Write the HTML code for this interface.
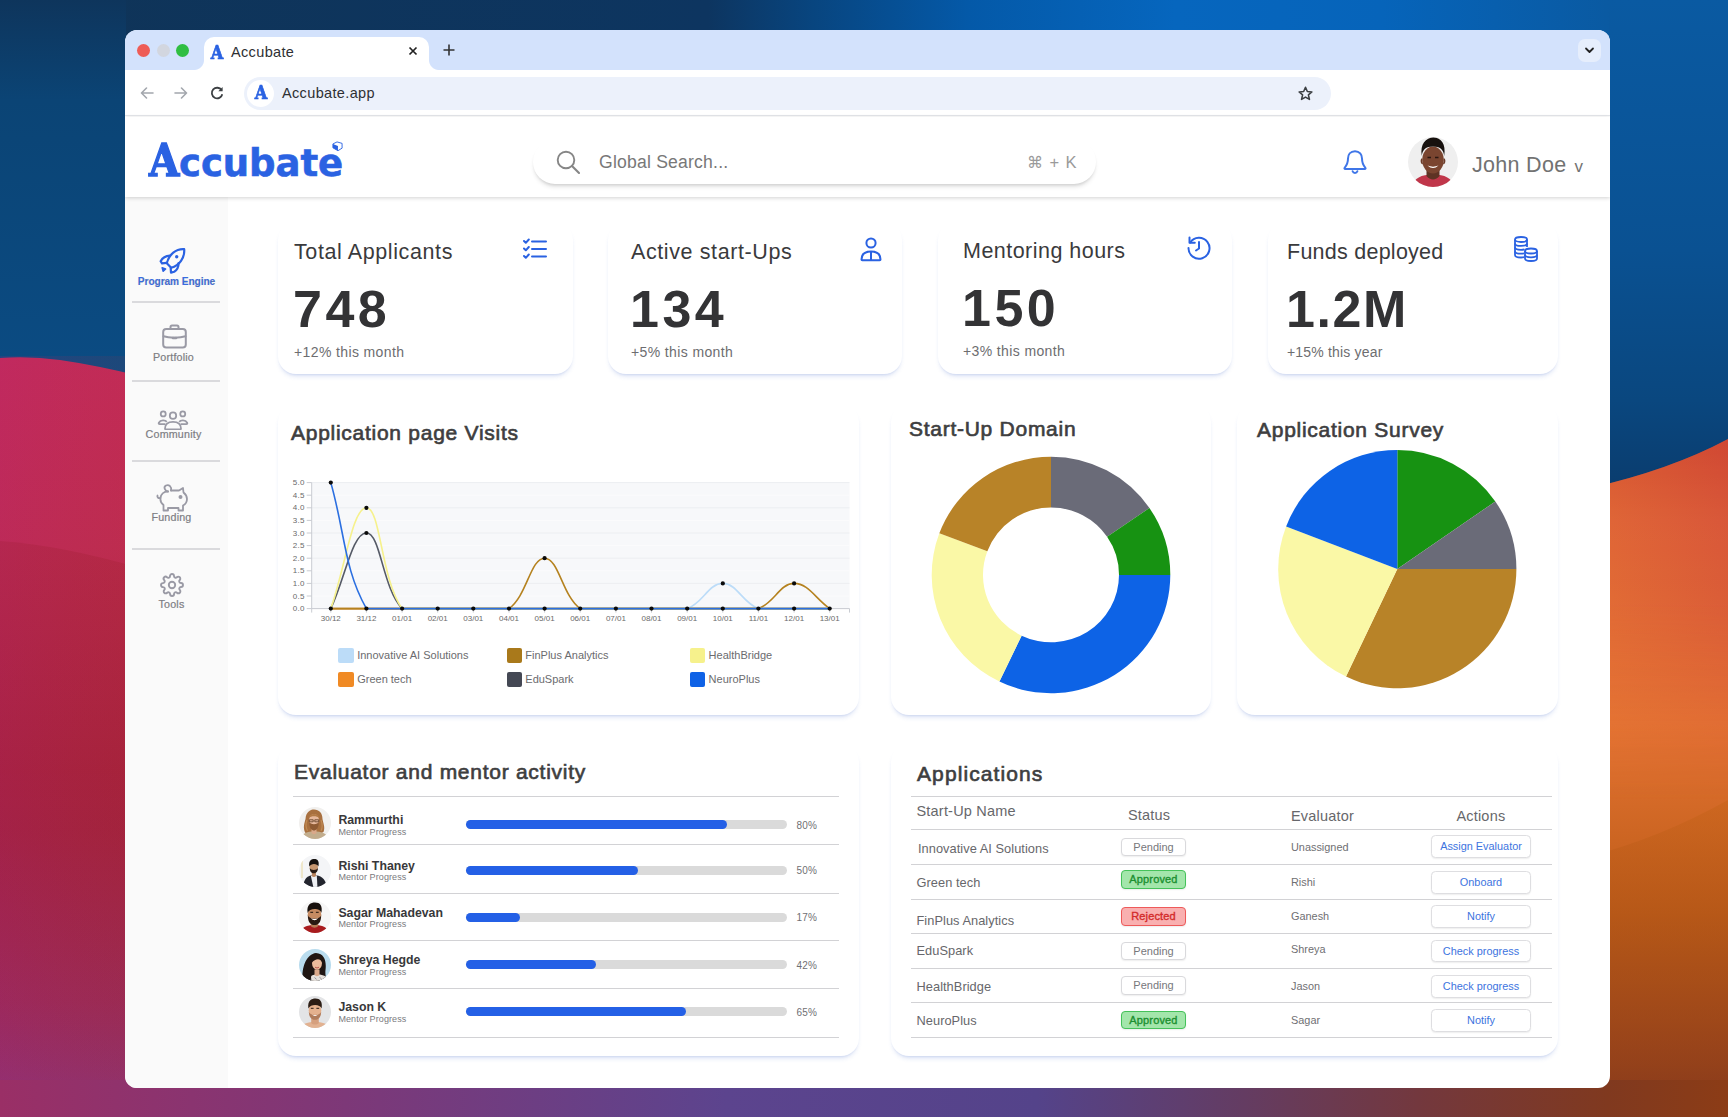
<!DOCTYPE html>
<html lang="en">
<head>
<meta charset="utf-8">
<title>Accubate</title>
<style>
*{box-sizing:border-box;margin:0;padding:0}
html,body{width:1728px;height:1117px;overflow:hidden;background:#0b4a82}
body{font-family:"Liberation Sans",sans-serif;color:#3a3a3c;position:relative}
.abs{position:absolute}
#wall{position:absolute;left:0;top:0;width:1728px;height:1117px}
#win{position:absolute;left:125px;top:30px;width:1485px;height:1058px;border-radius:12px;background:#fff;overflow:hidden}
/* browser chrome */
#tabbar{position:absolute;left:0;top:0;width:1485px;height:40px;background:#d3e2fc}
#tab{position:absolute;left:79px;top:7px;width:225px;height:34px;background:#fff;border-radius:10px 10px 0 0}
#tab:before,#tab:after{content:"";position:absolute;bottom:1px;width:10px;height:10px;background:radial-gradient(circle at 0 0,rgba(255,255,255,0) 9.5px,#fff 10.5px)}
#tab:before{left:-10px}
#tab:after{right:-10px;transform:scaleX(-1)}
#toolbar{position:absolute;left:0;top:40px;width:1485px;height:46px;background:#fff;border-radius:10px 10px 0 0;border-bottom:1px solid #e4e6ea}
#url{position:absolute;left:119px;top:7px;width:1087px;height:33px;border-radius:17px;background:#ecf1fb}
.t{position:absolute;white-space:nowrap;line-height:1}
.fav{font-family:"DejaVu Serif","Liberation Serif",serif;font-weight:bold;color:#2a62e2;-webkit-text-stroke:.7px #2a62e2;transform:scaleX(.9)}
/* app */
#apphead{position:absolute;left:0;top:87px;width:1485px;height:80px;background:#fff;box-shadow:0 1px 4px rgba(0,0,0,.18);z-index:3}
#side{position:absolute;left:0;top:167px;width:103px;height:891px;background:#fafafa}
.logo{color:#2a62e2;font-weight:bold;height:48px;line-height:48px}
.lA{font-family:"DejaVu Serif","Liberation Serif",serif;font-size:44.500px;display:inline-block;transform:scaleX(.88);transform-origin:0 80%;-webkit-text-stroke:1.400px #2a62e2;margin-right:-4.500px}
.lR{font-family:"DejaVu Sans","Liberation Sans",sans-serif;font-size:37px;letter-spacing:-.05px;-webkit-text-stroke:.6px #2a62e2}
.sl{text-align:center;font-size:10.700px;color:#7d7d83;letter-spacing:.2px;-webkit-text-stroke:.2px #7d7d83}
.sd{position:absolute;left:7px;width:88px;height:1.500px;background:#dadadd}
.st{font-size:21.5px;color:#3a3a3c;letter-spacing:.6px;margin-top:1px}
.sn{font-size:52px;font-weight:bold;color:#333335;letter-spacing:3.500px;margin-left:1px}
.ss{font-size:14px;color:#6d6d70;letter-spacing:.38px}
.ct{font-size:21px;color:#3e3e40;letter-spacing:.73px;-webkit-text-stroke:.65px #3e3e40}
.lg{font-size:11px;color:#6b6b6e}
.hl{position:absolute;height:1px;background:#d2d2d5}
.mn{font-size:12.300px;font-weight:bold;color:#38383a}
.mp{font-size:9px;color:#7a7a7e;letter-spacing:.1px}
.pc{font-size:10px;color:#6f6f73;letter-spacing:.3px}
.th{font-size:14.500px;color:#67676b;letter-spacing:.2px}
.tn{font-size:12.800px;color:#67676b;letter-spacing:.05px}
.te{font-size:10.900px;color:#6f6f73}
.bd{position:absolute;width:65px;height:18.500px;line-height:16.500px;border-radius:4px;text-align:center;font-size:11px;border:1px solid #d9d9dc;box-shadow:0 1px 1.500px rgba(0,0,0,.07)}
.bp{color:#77777b;background:#fff}
.ba{color:#1c8f30;background:#a3e6ab;border-color:#45c25a;-webkit-text-stroke:.35px #1c8f30;letter-spacing:.15px}
.br{color:#d32b2b;background:#f9b0b0;border-color:#ee5a5a;-webkit-text-stroke:.35px #d32b2b;letter-spacing:.15px}
.bt{position:absolute;width:100px;height:22.500px;line-height:20.500px;border-radius:4.500px;text-align:center;font-size:10.900px;color:#3d74e0;border:1px solid #dedee1;background:#fff;box-shadow:0 1px 1.500px rgba(0,0,0,.07)}
.card{position:absolute;background:#fff;border-radius:18px;box-shadow:0 4px 5px -2px rgba(60,100,200,.2),0 2px 2px -1px rgba(60,100,200,.1)}
</style>
</head>
<body>
<svg id="wall" viewBox="0 0 1728 1117">
<defs>
<linearGradient id="gTop" x1="0" y1="0" x2="1" y2="0">
<stop offset="0" stop-color="#0f3458"/><stop offset="0.41" stop-color="#0d3560"/><stop offset="0.47" stop-color="#08457f"/><stop offset="0.56" stop-color="#0459a8"/><stop offset="0.68" stop-color="#0666be"/><stop offset="0.8" stop-color="#0664ba"/><stop offset="0.93" stop-color="#0a5aa2"/><stop offset="1" stop-color="#0b5596"/>
</linearGradient>
<linearGradient id="gLeftBlue" x1="0" y1="0" x2="0" y2="1">
<stop offset="0" stop-color="#0e355c"/><stop offset="0.25" stop-color="#0b4475"/><stop offset="1" stop-color="#0b4c84"/>
</linearGradient>
<linearGradient id="gPink" x1="0" y1="0" x2="0" y2="1">
<stop offset="0" stop-color="#c42b5a"/><stop offset="0.25" stop-color="#bf2c52"/><stop offset="0.62" stop-color="#a3213a"/><stop offset="0.85" stop-color="#9a2a55"/><stop offset="1" stop-color="#8a3578"/>
</linearGradient>
<linearGradient id="gPink2" x1="0" y1="541" x2="0" y2="1117" gradientUnits="userSpaceOnUse">
<stop offset="0" stop-color="#b22744" stop-opacity=".75"/><stop offset="0.4" stop-color="#a3203a" stop-opacity=".6"/><stop offset="0.7" stop-color="#9a2850" stop-opacity=".3"/><stop offset="1" stop-color="#8a3578" stop-opacity="0"/>
</linearGradient>
<linearGradient id="gPinkH" x1="0" y1="0" x2="1" y2="0">
<stop offset="0" stop-color="#b0207a" stop-opacity=".16"/><stop offset="1" stop-color="#b03030" stop-opacity=".1"/>
</linearGradient>
<linearGradient id="gRightBlue" x1="0" y1="0" x2="0" y2="1">
<stop offset="0" stop-color="#0a5aa2"/><stop offset="0.5" stop-color="#0a5192"/><stop offset="0.8" stop-color="#0a477f"/><stop offset="1" stop-color="#0a3b6c"/>
</linearGradient>
<linearGradient id="gOrange" x1="0" y1="0" x2="0" y2="1">
<stop offset="0" stop-color="#cf4730"/><stop offset="0.12" stop-color="#dc5f39"/><stop offset="0.42" stop-color="#e47333"/><stop offset="0.7" stop-color="#bd5c17"/><stop offset="0.9" stop-color="#98441a"/><stop offset="1" stop-color="#82381c"/>
</linearGradient>
<linearGradient id="gOrH" x1="0" y1="0" x2="1" y2="0">
<stop offset="0" stop-color="#e87832" stop-opacity=".35"/><stop offset="1" stop-color="#d24a3a" stop-opacity=".35"/>
</linearGradient>
<linearGradient id="gFade" x1="0" y1="439" x2="0" y2="800" gradientUnits="userSpaceOnUse"><stop offset="0" stop-color="#fff"/><stop offset="0.45" stop-color="#fff"/><stop offset="1" stop-color="#000"/></linearGradient>
<mask id="mOr" maskUnits="userSpaceOnUse" x="1590" y="430" width="138" height="380"><rect x="1590" y="430" width="138" height="380" fill="url(#gFade)"/></mask>
<linearGradient id="gOr2" x1="0" y1="800" x2="0" y2="1117" gradientUnits="userSpaceOnUse">
<stop offset="0" stop-color="#c8641a" stop-opacity=".55"/><stop offset="0.5" stop-color="#a84e18" stop-opacity=".5"/><stop offset="1" stop-color="#8c3a1c" stop-opacity=".3"/>
</linearGradient>
<linearGradient id="gBottom" x1="0" y1="0" x2="1" y2="0">
<stop offset="0" stop-color="#9a2f66"/><stop offset="0.2" stop-color="#7d3878"/><stop offset="0.42" stop-color="#5c448e"/><stop offset="0.6" stop-color="#54438a"/><stop offset="0.72" stop-color="#643c62"/><stop offset="0.82" stop-color="#73383e"/><stop offset="0.93" stop-color="#80391f"/><stop offset="1" stop-color="#8c3c16"/>
</linearGradient>
</defs>
<rect x="0" y="0" width="1728" height="1117" fill="url(#gTop)"/>
<rect x="0" y="0" width="126" height="400" fill="url(#gLeftBlue)"/>
<path d="M0 358 Q30 356 60 360 Q95 365 140 376 L140 1117 L0 1117Z" fill="url(#gPink)"/>
<path d="M0 541 Q60 545 140 568 L140 1117 L0 1117Z" fill="url(#gPink2)"/>
<rect x="0" y="356" width="140" height="761" fill="url(#gPinkH)"/>
<rect x="1609" y="0" width="119" height="500" fill="url(#gRightBlue)"/>
<path d="M1590 488 Q1670 470 1728 439 L1728 1117 L1590 1117Z" fill="url(#gOrange)"/>
<path d="M1590 488 Q1670 470 1728 439 L1728 800 L1590 800Z" fill="url(#gOrH)" mask="url(#mOr)"/>
<path d="M1590 856 Q1660 838 1728 800 L1728 1117 L1590 1117Z" fill="url(#gOr2)"/>
<rect x="0" y="1080" width="1728" height="37" fill="url(#gBottom)"/>
</svg>

<div id="win">
  <div id="tabbar">
    <div class="abs" style="left:12px;top:14px;width:13px;height:13px;border-radius:50%;background:#ee5c56"></div>
    <div class="abs" style="left:32px;top:14px;width:13px;height:13px;border-radius:50%;background:#d2d6df"></div>
    <div class="abs" style="left:51px;top:14px;width:13px;height:13px;border-radius:50%;background:#2fbe42"></div>
    <div id="tab">
      <span class="t fav" style="left:6px;top:7px;font-size:18px">A</span>
      <span class="t" style="left:27px;top:8px;font-size:14.5px;color:#2e3033;letter-spacing:.35px">Accubate</span>
      <svg class="abs" style="left:204px;top:9px" width="10" height="10" viewBox="0 0 10 10"><path d="M1.5 1.5 L8.5 8.5 M8.5 1.5 L1.5 8.5" stroke="#222" stroke-width="1.7" fill="none"/></svg>
    </div>
    <svg class="abs" style="left:318px;top:14px" width="12" height="12" viewBox="0 0 12 12"><path d="M6 0.5 V11.5 M0.5 6 H11.5" stroke="#333" stroke-width="1.6" fill="none"/></svg>
    <div class="abs" style="left:1453px;top:9px;width:23px;height:23px;border-radius:7px;background:#e6eefc"></div>
    <svg class="abs" style="left:1459px;top:16px" width="11" height="9" viewBox="0 0 11 9"><path d="M2 2.5 L5.5 6 L9 2.5" stroke="#222" stroke-width="1.8" fill="none" stroke-linecap="round" stroke-linejoin="round"/></svg>
  </div>
  <div id="toolbar">
    <svg class="abs" style="left:15px;top:17px" width="14" height="12" viewBox="0 0 14 12"><path d="M13 6 H2 M6.5 1 L1.5 6 L6.5 11" stroke="#a3a7ad" stroke-width="1.6" fill="none" stroke-linecap="round" stroke-linejoin="round"/></svg>
    <svg class="abs" style="left:49px;top:17px" width="14" height="12" viewBox="0 0 14 12"><path d="M1 6 H12 M7.5 1 L12.5 6 L7.5 11" stroke="#a3a7ad" stroke-width="1.6" fill="none" stroke-linecap="round" stroke-linejoin="round"/></svg>
    <svg class="abs" style="left:85px;top:16px" width="14" height="14" viewBox="0 0 14 14"><path d="M11.6 4.2 A5.3 5.3 0 1 0 12.3 8.2" stroke="#3c4043" stroke-width="1.8" fill="none"/><path d="M12.6 1 V5.3 H8.3 Z" fill="#3c4043"/></svg>
    <div id="url">
      <div class="abs" style="left:3px;top:3px;width:27px;height:27px;border-radius:50%;background:#fff"></div>
      <span class="t fav" style="left:9.500px;top:6.500px;font-size:18px">A</span>
      <span class="t" style="left:38px;top:8.500px;font-size:14.5px;color:#2e3033;letter-spacing:.35px">Accubate.app</span>
      <svg class="abs" style="left:1053px;top:8px" width="17" height="17" viewBox="0 0 24 24"><path d="M12 3.2 L14.6 9.2 L21 9.8 L16.1 14 L17.6 20.4 L12 17 L6.4 20.4 L7.9 14 L3 9.8 L9.4 9.2 Z" stroke="#3c4043" stroke-width="2.2" fill="none" stroke-linejoin="round"/></svg>
    </div>
  </div>
  <div id="apphead">
    <span class="t logo" style="left:24px;top:18.500px"><span class="lA">A</span><span class="lR">ccubate</span></span>
    <svg class="abs" style="left:207px;top:24px" width="11" height="11" viewBox="0 0 12 12"><path d="M1 3.2 L5.5 1 L11 2.6 L11 7.8 L6.5 10.6 L1 7.4Z" fill="#fff" stroke="#2a62e2" stroke-width="1"/><path d="M1 3.2 L6.5 5.4 L6.5 10.6 L1 7.4Z" fill="#2a62e2"/></svg>
    <div class="abs" style="left:408px;top:23px;width:563px;height:44px;border-radius:22px;background:#fff;box-shadow:0 4px 5px -2px rgba(0,0,0,.16),0 2px 3px -1px rgba(0,0,0,.07)"></div>
    <svg class="abs" style="left:430px;top:32px" width="28" height="28" viewBox="0 0 28 28"><circle cx="11" cy="11" r="8.3" stroke="#868686" stroke-width="1.9" fill="none"/><path d="M17 17 L24 24" stroke="#868686" stroke-width="2.1" stroke-linecap="round"/></svg>
    <span class="t" style="left:474px;top:37px;font-size:17.600px;color:#787878;letter-spacing:.2px">Global Search...</span>
    <span class="t" style="left:902px;top:37px;font-size:16.500px;color:#9a9a9a;letter-spacing:.9px"><span style="font-family:'DejaVu Sans',sans-serif;font-size:16px">&#8984;</span> + K</span>
    <svg class="abs" style="left:1215px;top:30px" width="30" height="30" viewBox="0 0 30 30"><path d="M15 4.2 C10.4 4.2 8 7.6 8 11.6 C8 16.4 6.6 18.6 4.6 20.8 C4.2 21.3 4.5 22 5.2 22 H24.8 C25.5 22 25.8 21.3 25.4 20.8 C23.4 18.6 22 16.4 22 11.6 C22 7.6 19.6 4.2 15 4.2Z" stroke="#3f76e8" stroke-width="2" fill="none" stroke-linejoin="round"/><path d="M12.6 24.2 C13 25.4 13.9 26 15 26 C16.1 26 17 25.4 17.4 24.2" stroke="#3f76e8" stroke-width="2" fill="none" stroke-linecap="round"/></svg>
    <svg class="abs" style="left:1283px;top:20px" width="50" height="50" viewBox="0 0 50 50"><defs><clipPath id="cpJ"><circle cx="25" cy="25" r="25"/></clipPath></defs><g clip-path="url(#cpJ)"><rect width="50" height="50" fill="#efefef"/><path d="M4 50 C6 41 13 37.500 25 37.500 C37 37.500 44 41 46 50Z" fill="#c0364a"/><path d="M18.500 31 H31.500 V39 C28 43.500 22 43.500 18.500 39Z" fill="#5e3324"/><ellipse cx="25" cy="23" rx="10.800" ry="13.500" fill="#7a4530"/><path d="M13.800 19 C11.800 7 18 0.500 25.500 0.500 C33 0.500 38.200 7 36.200 19 C35.600 12.500 32 9.500 25 9.500 C18 9.500 14.400 12.500 13.800 19Z" fill="#17110e"/><path d="M19.500 28.500 Q25 33.500 30.500 28.500 Q25 30.800 19.500 28.500Z" fill="#fff"/><path d="M19.500 20.500 h3.500 m4 0 h3.500" stroke="#2a1710" stroke-width="1.300"/><path d="M14.300 22 C13 22 13 26.500 14.800 26.500 M35.700 22 C37 22 37 26.500 35.200 26.500" stroke="#6a3a28" stroke-width="1.500" fill="none"/></g></svg>
    <span class="t" style="left:1347px;top:38px;font-size:21.5px;color:#727272;letter-spacing:.3px">John Doe</span>
    <span class="t" style="left:1449.500px;top:40.500px;font-size:17px;color:#727272">v</span>
  </div>
  <div id="side">
    <!-- Program Engine -->
    <svg class="abs" style="left:33px;top:48.500px" width="30" height="30" viewBox="0 0 30 30" fill="none" stroke="#2a62e2" stroke-width="2.200" stroke-linecap="round" stroke-linejoin="round"><path d="M26.200 3.200 C18 2.600 11 8.500 8.800 17.200 L13.200 21.800 C21.500 19.500 26.800 12 26.200 3.200Z"/><circle cx="18.700" cy="10.800" r="1.700" fill="#2a62e2" stroke="none"/><path d="M11.800 9.600 C7.500 9.800 4.200 12.300 2.600 15.200 L4 17.400 L8.600 16.800"/><path d="M20.600 17 C20.600 21 18.800 24.200 16.200 25.800 L13 26.600 L12.700 22"/><path d="M4.200 21.800 L7.600 23 L5.200 25.200Z" fill="#2a62e2" stroke-width="1.600"/></svg>
    <span class="t sl" style="left:0;width:103px;top:80px;color:#376be3;font-weight:bold;font-size:10.100px;letter-spacing:-.05px">Program Engine</span>
    <div class="sd" style="top:104px"></div>
    <!-- Portfolio -->
    <svg class="abs" style="left:34.500px;top:126px" width="28" height="26" viewBox="0 0 28 26" fill="none" stroke="#9a9aa5" stroke-width="2" stroke-linejoin="round" stroke-linecap="round"><rect x="3.200" y="6" width="22.600" height="18.500" rx="3"/><path d="M10.500 6 V4 C10.500 3 11 2.500 12 2.500 H17 C18 2.500 18.500 3 18.500 4 V6"/><path d="M3.500 13.300 C9 15.200 20 15.200 25.500 13.300"/><path d="M13 15 H16" stroke-width="2.600"/></svg>
    <span class="t sl" style="left:0;width:97px;top:155px">Portfolio</span>
    <div class="sd" style="top:183px"></div>
    <!-- Community -->
    <svg class="abs" style="left:32px;top:211.500px" width="32" height="21.300" viewBox="0 0 36 24" fill="none" stroke="#9a9aa5" stroke-width="2" stroke-linejoin="round"><circle cx="18" cy="7.500" r="3.600"/><circle cx="7" cy="5.500" r="2.800"/><circle cx="29" cy="5.500" r="2.800"/><path d="M9 22 C9 17 12.500 14.500 18 14.500 C23.500 14.500 27 17 27 22 C27 22.600 26.600 23 26 23 H10 C9.400 23 9 22.600 9 22Z"/><path d="M11 14.500 C9.500 12.500 4 12 2 15.500 C1.600 16.300 2 17 3 17 H9.500"/><path d="M25 14.500 C26.500 12.500 32 12 34 15.500 C34.400 16.300 34 17 33 17 H26.500"/></svg>
    <span class="t sl" style="left:0;width:97px;top:232px">Community</span>
    <div class="sd" style="top:263px"></div>
    <!-- Funding -->
    <svg class="abs" style="left:30px;top:285.500px" width="34" height="30" viewBox="0 0 34 30" fill="none" stroke="#9a9aa5" stroke-width="1.800" stroke-linejoin="round" stroke-linecap="round"><path d="M13 8.500 C10 8 8 4 11 2.500 C14 1 17 4 16 7.500"/><path d="M16 7.500 H24 L28 5 L28.500 9.500 C31 11.500 32 14 32 16 C32 20 30 21.500 28 22.500 V27.500 H23.500 V25 H13 V27.500 H8.500 V22 C6 20 5 17.500 5.500 14.500 C6 11.500 8.500 8.500 13 8.500"/><path d="M5.500 15 C3 15.500 2 14 2.500 12.500"/><circle cx="25.500" cy="14" r="1.100" fill="#9a9aa5"/></svg>
    <span class="t sl" style="left:0;width:93px;top:315px">Funding</span>
    <div class="sd" style="top:351px"></div>
    <!-- Tools -->
    <svg class="abs" style="left:35px;top:375.500px" width="24" height="24" viewBox="0 0 24 24" fill="none" stroke="#9a9aa5" stroke-width="1.900" stroke-linejoin="round"><circle cx="12" cy="12" r="3.200"/><path d="M19.400 15a1.650 1.650 0 0 0 .33 1.820l.06.06a2 2 0 1 1-2.830 2.830l-.06-.06a1.650 1.650 0 0 0-1.820-.33 1.650 1.650 0 0 0-1 1.510V21a2 2 0 0 1-4 0v-.09A1.650 1.650 0 0 0 9 19.400a1.650 1.650 0 0 0-1.820.33l-.06.06a2 2 0 1 1-2.830-2.830l.06-.06a1.650 1.650 0 0 0 .33-1.820 1.650 1.650 0 0 0-1.510-1H3a2 2 0 0 1 0-4h.09A1.650 1.650 0 0 0 4.600 9a1.650 1.650 0 0 0-.33-1.820l-.06-.06a2 2 0 1 1 2.830-2.830l.06.06a1.650 1.650 0 0 0 1.820.33H9a1.650 1.650 0 0 0 1-1.510V3a2 2 0 0 1 4 0v.09a1.650 1.650 0 0 0 1 1.510 1.650 1.650 0 0 0 1.820-.33l.06-.06a2 2 0 1 1 2.830 2.830l-.06.06a1.650 1.650 0 0 0-.33 1.820V9a1.650 1.650 0 0 0 1.510 1H21a2 2 0 0 1 0 4h-.09a1.650 1.650 0 0 0-1.510 1z"/></svg>
    <span class="t sl" style="left:0;width:93px;top:402px">Tools</span>
  </div>
  <!-- stat cards -->
  <div class="card" style="left:153px;top:192px;width:295px;height:152px"></div>
  <span class="t st" style="left:169px;top:211px">Total Applicants</span>
  <span class="t sn" style="left:167px;top:253px">748</span>
  <span class="t ss" style="left:169px;top:315px">+12% this month</span>
  <svg class="abs" style="left:397px;top:207px" width="26" height="24" viewBox="0 0 26 24" fill="none" stroke="#2a62e2" stroke-width="2" stroke-linecap="round" stroke-linejoin="round"><path d="M10 4.500 H24 M10 12 H24 M10 19.500 H24"/><path d="M2 4 L3.800 5.800 L6.800 2.500 M2 11.500 L3.800 13.300 L6.800 10 M2 19 L3.800 20.800 L6.800 17.500"/></svg>
  <div class="card" style="left:483px;top:192px;width:294px;height:152px"></div>
  <span class="t st" style="left:506px;top:211px">Active start-Ups</span>
  <span class="t sn" style="left:504px;top:253px">134</span>
  <span class="t ss" style="left:506px;top:315px">+5% this month</span>
  <svg class="abs" style="left:734px;top:206px" width="24" height="26" viewBox="0 0 24 26" fill="none" stroke="#2a62e2" stroke-width="2" stroke-linejoin="round"><circle cx="12" cy="7" r="4.600"/><path d="M2.500 23.500 C2.500 18 6.500 15.500 12 15.500 C17.500 15.500 21.500 18 21.500 23.500 C21.500 24 21.200 24.300 20.700 24.300 H3.300 C2.800 24.300 2.500 24 2.500 23.500Z"/><path d="M12 16 V24"/></svg>
  <div class="card" style="left:813px;top:192px;width:294px;height:152px"></div>
  <span class="t st" style="left:838px;top:210px;letter-spacing:.47px">Mentoring hours</span>
  <span class="t sn" style="left:836px;top:252px">150</span>
  <span class="t ss" style="left:838px;top:314px">+3% this month</span>
  <svg class="abs" style="left:1060px;top:204px" width="28" height="28" viewBox="0 0 28 28" fill="none" stroke="#2a62e2" stroke-width="2" stroke-linecap="round" stroke-linejoin="round"><path d="M5.200 8.500 A10.500 10.500 0 1 1 3.500 14"/><path d="M4.500 3.500 V8.800 H9.800"/><path d="M14 8 V14.500 L11 16.500"/></svg>
  <div class="card" style="left:1143px;top:192px;width:290px;height:152px"></div>
  <span class="t st" style="left:1162px;top:211px;letter-spacing:.25px">Funds deployed</span>
  <span class="t sn" style="left:1160px;top:253px;letter-spacing:1.600px">1.2M</span>
  <span class="t ss" style="left:1162px;top:315px;letter-spacing:.18px">+15% this year</span>
  <svg class="abs" style="left:1387px;top:205px" width="28" height="28" viewBox="0 0 28 28" fill="none" stroke="#2a62e2" stroke-width="1.800" stroke-linejoin="round"><ellipse cx="9" cy="4.500" rx="6" ry="2.500"/><path d="M3 4.500 V20 C3 21.400 5.700 22.500 9 22.500 C10 22.500 11 22.400 12 22.200"/><path d="M15 4.500 V12"/><path d="M3 8.400 C3 9.800 5.700 10.900 9 10.900 C12.300 10.900 15 9.800 15 8.400 M3 12.300 C3 13.700 5.700 14.800 9 14.800 C10.500 14.800 11.500 14.600 12.500 14.300 M3 16.200 C3 17.600 5.700 18.700 9 18.700 C10 18.700 11 18.600 12 18.400"/><ellipse cx="19" cy="16" rx="6" ry="2.500"/><path d="M13 16 V23.500 C13 24.900 15.700 26 19 26 C22.300 26 25 24.900 25 23.500 V16"/><path d="M13 19.800 C13 21.200 15.700 22.300 19 22.300 C22.300 22.300 25 21.200 25 19.800"/></svg>
  <!--ROW2START-->
  <div class="card" style="left:153px;top:374px;width:581px;height:311px"></div>
  <div class="card" style="left:766px;top:374px;width:320px;height:311px"></div>
  <div class="card" style="left:1112px;top:374px;width:321px;height:311px"></div>
  <span class="t ct" style="left:166px;top:392px">Application page Visits</span>
  <span class="t ct" style="left:784px;top:388px">Start-Up Domain</span>
  <span class="t ct" style="left:1132px;top:389px">Application Survey</span>
  <svg class="abs" style="left:160px;top:440px" width="575" height="160" viewBox="0 0 575 160" font-family="Liberation Sans, sans-serif" font-size="8" fill="#6a6a6a"><rect x="26.7" y="12.6" width="537.8" height="126.0" fill="#f7f8fa"/><path d="M26.7 138.6 H564.5" stroke="#eceef1" stroke-width="1"/><path d="M21.7 138.6 H26.7" stroke="#c9ccd2" stroke-width="1"/><text x="19.7" y="141.2" text-anchor="end" letter-spacing=".3">0.0</text><path d="M26.7 126.0 H564.5" stroke="#fbfbfc" stroke-width="1"/><path d="M21.7 126.0 H26.7" stroke="#c9ccd2" stroke-width="1"/><text x="19.7" y="128.6" text-anchor="end" letter-spacing=".3">0.5</text><path d="M26.7 113.4 H564.5" stroke="#eceef1" stroke-width="1"/><path d="M21.7 113.4 H26.7" stroke="#c9ccd2" stroke-width="1"/><text x="19.7" y="116.0" text-anchor="end" letter-spacing=".3">1.0</text><path d="M26.7 100.8 H564.5" stroke="#fbfbfc" stroke-width="1"/><path d="M21.7 100.8 H26.7" stroke="#c9ccd2" stroke-width="1"/><text x="19.7" y="103.4" text-anchor="end" letter-spacing=".3">1.5</text><path d="M26.7 88.2 H564.5" stroke="#eceef1" stroke-width="1"/><path d="M21.7 88.2 H26.7" stroke="#c9ccd2" stroke-width="1"/><text x="19.7" y="90.8" text-anchor="end" letter-spacing=".3">2.0</text><path d="M26.7 75.6 H564.5" stroke="#fbfbfc" stroke-width="1"/><path d="M21.7 75.6 H26.7" stroke="#c9ccd2" stroke-width="1"/><text x="19.7" y="78.2" text-anchor="end" letter-spacing=".3">2.5</text><path d="M26.7 63.0 H564.5" stroke="#eceef1" stroke-width="1"/><path d="M21.7 63.0 H26.7" stroke="#c9ccd2" stroke-width="1"/><text x="19.7" y="65.6" text-anchor="end" letter-spacing=".3">3.0</text><path d="M26.7 50.4 H564.5" stroke="#fbfbfc" stroke-width="1"/><path d="M21.7 50.4 H26.7" stroke="#c9ccd2" stroke-width="1"/><text x="19.7" y="53.0" text-anchor="end" letter-spacing=".3">3.5</text><path d="M26.7 37.8 H564.5" stroke="#eceef1" stroke-width="1"/><path d="M21.7 37.8 H26.7" stroke="#c9ccd2" stroke-width="1"/><text x="19.7" y="40.4" text-anchor="end" letter-spacing=".3">4.0</text><path d="M26.7 25.2 H564.5" stroke="#fbfbfc" stroke-width="1"/><path d="M21.7 25.2 H26.7" stroke="#c9ccd2" stroke-width="1"/><text x="19.7" y="27.8" text-anchor="end" letter-spacing=".3">4.5</text><path d="M26.7 12.6 H564.5" stroke="#eceef1" stroke-width="1"/><path d="M21.7 12.6 H26.7" stroke="#c9ccd2" stroke-width="1"/><text x="19.7" y="15.2" text-anchor="end" letter-spacing=".3">5.0</text><path d="M26.7 12.6 V142.6" stroke="#c9ccd2" stroke-width="1"/><path d="M26.7 138.6 H564.5" stroke="#c9ccd2" stroke-width="1"/><path d="M45.8 138.6 v4" stroke="#c9ccd2" stroke-width="1"/><text x="45.8" y="151.0" text-anchor="middle">30/12</text><path d="M81.4 138.6 v4" stroke="#c9ccd2" stroke-width="1"/><text x="81.4" y="151.0" text-anchor="middle">31/12</text><path d="M117.1 138.6 v4" stroke="#c9ccd2" stroke-width="1"/><text x="117.1" y="151.0" text-anchor="middle">01/01</text><path d="M152.7 138.6 v4" stroke="#c9ccd2" stroke-width="1"/><text x="152.7" y="151.0" text-anchor="middle">02/01</text><path d="M188.3 138.6 v4" stroke="#c9ccd2" stroke-width="1"/><text x="188.3" y="151.0" text-anchor="middle">03/01</text><path d="M224.0 138.6 v4" stroke="#c9ccd2" stroke-width="1"/><text x="224.0" y="151.0" text-anchor="middle">04/01</text><path d="M259.6 138.6 v4" stroke="#c9ccd2" stroke-width="1"/><text x="259.6" y="151.0" text-anchor="middle">05/01</text><path d="M295.2 138.6 v4" stroke="#c9ccd2" stroke-width="1"/><text x="295.2" y="151.0" text-anchor="middle">06/01</text><path d="M330.9 138.6 v4" stroke="#c9ccd2" stroke-width="1"/><text x="330.9" y="151.0" text-anchor="middle">07/01</text><path d="M366.5 138.6 v4" stroke="#c9ccd2" stroke-width="1"/><text x="366.5" y="151.0" text-anchor="middle">08/01</text><path d="M402.2 138.6 v4" stroke="#c9ccd2" stroke-width="1"/><text x="402.2" y="151.0" text-anchor="middle">09/01</text><path d="M437.8 138.6 v4" stroke="#c9ccd2" stroke-width="1"/><text x="437.8" y="151.0" text-anchor="middle">10/01</text><path d="M473.4 138.6 v4" stroke="#c9ccd2" stroke-width="1"/><text x="473.4" y="151.0" text-anchor="middle">11/01</text><path d="M509.1 138.6 v4" stroke="#c9ccd2" stroke-width="1"/><text x="509.1" y="151.0" text-anchor="middle">12/01</text><path d="M544.7 138.6 v4" stroke="#c9ccd2" stroke-width="1"/><text x="544.7" y="151.0" text-anchor="middle">13/01</text><path d="M564.5 138.6 v4" stroke="#c9ccd2" stroke-width="1"/><path d="M45.8 138.6 C60.1 138.6 67.2 138.6 81.4 138.6 C95.7 138.6 102.8 138.6 117.1 138.6 C131.3 138.6 138.5 138.6 152.7 138.6 C167.0 138.6 174.1 138.6 188.3 138.6 C202.6 138.6 209.7 138.6 224.0 138.6 C238.2 138.6 245.4 138.6 259.6 138.6 C273.9 138.6 281.0 138.6 295.2 138.6 C309.5 138.6 316.6 138.6 330.9 138.6 C345.1 138.6 352.3 138.6 366.5 138.6 C380.8 138.6 389.3 138.6 402.2 138.6 C417.9 133.1 423.5 113.4 437.8 113.4 C452.0 113.4 457.7 133.1 473.4 138.6 C486.2 138.6 494.8 138.6 509.1 138.6 C523.3 138.6 530.4 138.6 544.7 138.6" fill="none" stroke="#bcdcf8" stroke-width="1.600"/><path d="M45.8 138.6 C60.1 138.6 67.2 138.6 81.4 138.6 C95.7 138.6 102.8 138.6 117.1 138.6 C131.3 138.6 138.5 138.6 152.7 138.6 C167.0 138.6 174.1 138.6 188.3 138.6 C202.6 138.6 209.7 138.6 224.0 138.6 C238.2 138.6 245.4 138.6 259.6 138.6 C273.9 138.6 281.0 138.6 295.2 138.6 C309.5 138.6 316.6 138.6 330.9 138.6 C345.1 138.6 352.3 138.6 366.5 138.6 C380.8 138.6 387.9 138.6 402.2 138.6 C416.4 138.6 423.5 138.6 437.8 138.6 C452.0 138.6 459.2 138.6 473.4 138.6 C487.7 138.6 494.8 138.6 509.1 138.6 C523.3 138.6 530.4 138.6 544.7 138.6" fill="none" stroke="#f08a24" stroke-width="1.600"/><path d="M45.8 138.6 C60.1 138.6 67.2 138.6 81.4 138.6 C95.7 138.6 102.8 138.6 117.1 138.6 C131.3 138.6 138.5 138.6 152.7 138.6 C167.0 138.6 174.1 138.6 188.3 138.6 C202.6 138.6 213.5 138.6 224.0 138.6 C242.1 125.8 245.4 88.2 259.6 88.2 C273.9 88.2 277.2 125.8 295.2 138.6 C305.7 138.6 316.6 138.6 330.9 138.6 C345.1 138.6 352.3 138.6 366.5 138.6 C380.8 138.6 387.9 138.6 402.2 138.6 C416.4 138.6 423.5 138.6 437.8 138.6 C452.0 138.6 460.6 138.6 473.4 138.6 C489.1 133.1 494.8 113.4 509.1 113.4 C523.3 113.4 530.4 128.5 544.7 138.6" fill="none" stroke="#b5821f" stroke-width="1.600"/><path d="M45.8 138.6 C60.1 108.4 67.2 63.0 81.4 63.0 C95.7 63.0 97.1 117.4 117.1 138.6 C125.6 138.6 138.5 138.6 152.7 138.6 C167.0 138.6 174.1 138.6 188.3 138.6 C202.6 138.6 209.7 138.6 224.0 138.6 C238.2 138.6 245.4 138.6 259.6 138.6 C273.9 138.6 281.0 138.6 295.2 138.6 C309.5 138.6 316.6 138.6 330.9 138.6 C345.1 138.6 352.3 138.6 366.5 138.6 C380.8 138.6 387.9 138.6 402.2 138.6 C416.4 138.6 423.5 138.6 437.8 138.6 C452.0 138.6 459.2 138.6 473.4 138.6 C487.7 138.6 494.8 138.6 509.1 138.6 C523.3 138.6 530.4 138.6 544.7 138.6" fill="none" stroke="#555a66" stroke-width="1.600"/><path d="M45.8 138.6 C60.1 98.3 67.2 37.8 81.4 37.8 C95.7 37.8 95.7 108.4 117.1 138.6 C124.2 138.6 138.5 138.6 152.7 138.6 C167.0 138.6 174.1 138.6 188.3 138.6 C202.6 138.6 209.7 138.6 224.0 138.6 C238.2 138.6 245.4 138.6 259.6 138.6 C273.9 138.6 281.0 138.6 295.2 138.6 C309.5 138.6 316.6 138.6 330.9 138.6 C345.1 138.6 352.3 138.6 366.5 138.6 C380.8 138.6 387.9 138.6 402.2 138.6 C416.4 138.6 423.5 138.6 437.8 138.6 C452.0 138.6 459.2 138.6 473.4 138.6 C487.7 138.6 494.8 138.6 509.1 138.6 C523.3 138.6 530.4 138.6 544.7 138.6" fill="none" stroke="#f6f18c" stroke-width="1.600"/><path d="M45.8 12.6 C60.1 63.0 59.0 99.0 81.4 138.6 C87.5 138.6 102.8 138.6 117.1 138.6 C131.3 138.6 138.5 138.6 152.7 138.6 C167.0 138.6 174.1 138.6 188.3 138.6 C202.6 138.6 209.7 138.6 224.0 138.6 C238.2 138.6 245.4 138.6 259.6 138.6 C273.9 138.6 281.0 138.6 295.2 138.6 C309.5 138.6 316.6 138.6 330.9 138.6 C345.1 138.6 352.3 138.6 366.5 138.6 C380.8 138.6 387.9 138.6 402.2 138.6 C416.4 138.6 423.5 138.6 437.8 138.6 C452.0 138.6 459.2 138.6 473.4 138.6 C487.7 138.6 494.8 138.6 509.1 138.6 C523.3 138.6 530.4 138.6 544.7 138.6" fill="none" stroke="#2b6fe0" stroke-width="1.600"/><circle cx="45.8" cy="138.6" r="2.100" fill="#0a0a0a"/><circle cx="45.8" cy="12.6" r="2.100" fill="#0a0a0a"/><circle cx="81.4" cy="138.6" r="2.100" fill="#0a0a0a"/><circle cx="81.4" cy="63.0" r="2.100" fill="#0a0a0a"/><circle cx="81.4" cy="37.8" r="2.100" fill="#0a0a0a"/><circle cx="117.1" cy="138.6" r="2.100" fill="#0a0a0a"/><circle cx="152.7" cy="138.6" r="2.100" fill="#0a0a0a"/><circle cx="188.3" cy="138.6" r="2.100" fill="#0a0a0a"/><circle cx="224.0" cy="138.6" r="2.100" fill="#0a0a0a"/><circle cx="259.6" cy="138.6" r="2.100" fill="#0a0a0a"/><circle cx="259.6" cy="88.2" r="2.100" fill="#0a0a0a"/><circle cx="295.2" cy="138.6" r="2.100" fill="#0a0a0a"/><circle cx="330.9" cy="138.6" r="2.100" fill="#0a0a0a"/><circle cx="366.5" cy="138.6" r="2.100" fill="#0a0a0a"/><circle cx="402.2" cy="138.6" r="2.100" fill="#0a0a0a"/><circle cx="437.8" cy="138.6" r="2.100" fill="#0a0a0a"/><circle cx="437.8" cy="113.4" r="2.100" fill="#0a0a0a"/><circle cx="473.4" cy="138.6" r="2.100" fill="#0a0a0a"/><circle cx="509.1" cy="138.6" r="2.100" fill="#0a0a0a"/><circle cx="509.1" cy="113.4" r="2.100" fill="#0a0a0a"/><circle cx="544.7" cy="138.6" r="2.100" fill="#0a0a0a"/></svg>
  <div class="abs" style="left:213.4px;top:618.0px;width:15.500px;height:15px;border-radius:2px;background:#bcdcf8"></div>
  <span class="t lg" style="left:232.2px;top:620.0px">Innovative AI Solutions</span>
  <div class="abs" style="left:381.5px;top:618.0px;width:15.500px;height:15px;border-radius:2px;background:#a9791b"></div>
  <span class="t lg" style="left:400.3px;top:620.0px">FinPlus Analytics</span>
  <div class="abs" style="left:564.8px;top:618.0px;width:15.500px;height:15px;border-radius:2px;background:#f6f18c"></div>
  <span class="t lg" style="left:583.6px;top:620.0px">HealthBridge</span>
  <div class="abs" style="left:213.4px;top:642.0px;width:15.500px;height:15px;border-radius:2px;background:#f08a24"></div>
  <span class="t lg" style="left:232.2px;top:644.0px">Green tech</span>
  <div class="abs" style="left:381.5px;top:642.0px;width:15.500px;height:15px;border-radius:2px;background:#444854"></div>
  <span class="t lg" style="left:400.3px;top:644.0px">EduSpark</span>
  <div class="abs" style="left:564.8px;top:642.0px;width:15.500px;height:15px;border-radius:2px;background:#0f62e6"></div>
  <span class="t lg" style="left:583.6px;top:644.0px">NeuroPlus</span>
  <svg class="abs" style="left:800px;top:420px" width="252" height="250" viewBox="0 0 252 250"><g transform="translate(0 124.9) scale(1 .991) translate(0 -124.9)"><path d="M126.00 5.60 A119.3 119.3 0 0 1 224.44 57.50 L182.11 86.48 A68 68 0 0 0 126.00 56.90Z" fill="#6a6b78"/><path d="M224.44 57.50 A119.3 119.3 0 0 1 245.30 124.90 L194.00 124.90 A68 68 0 0 0 182.11 86.48Z" fill="#179212"/><path d="M245.30 124.90 A119.3 119.3 0 0 1 74.45 232.49 L96.62 186.22 A68 68 0 0 0 194.00 124.90Z" fill="#0d63e6"/><path d="M74.45 232.49 A119.3 119.3 0 0 1 14.33 82.93 L62.35 100.97 A68 68 0 0 0 96.62 186.22Z" fill="#faf8a6"/><path d="M14.33 82.93 A119.3 119.3 0 0 1 126.00 5.60 L126.00 56.90 A68 68 0 0 0 62.35 100.97Z" fill="#b88328"/></g></svg>
  <svg class="abs" style="left:1147px;top:415px" width="252" height="250" viewBox="0 0 252 250"><path d="M125.30 124.10 L125.30 5.00 A119.1 119.1 0 0 1 223.34 56.47Z" fill="#179212"/><path d="M125.30 124.10 L223.34 56.47 A119.1 119.1 0 0 1 244.40 124.10Z" fill="#6a6b78"/><path d="M125.30 124.10 L244.40 124.10 A119.1 119.1 0 0 1 74.03 231.60Z" fill="#b88328"/><path d="M125.30 124.10 L74.03 231.60 A119.1 119.1 0 0 1 14.11 81.42Z" fill="#faf8a6"/><path d="M125.30 124.10 L14.11 81.42 A119.1 119.1 0 0 1 125.30 5.00Z" fill="#0d63e6"/></svg>
  <!--ROW2END-->
  <!--ROW3START-->
  <div class="card" style="left:153px;top:714px;width:581px;height:312px"></div>
  <div class="card" style="left:766px;top:714px;width:667px;height:312px"></div>
  <span class="t ct" style="left:169px;top:731px">Evaluator and mentor activity</span>
  <span class="t ct" style="left:792px;top:733px;letter-spacing:1.100px">Applications</span>
  <div class="hl" style="left:168px;top:766px;width:546px"></div>
  <div class="hl" style="left:168px;top:814px;width:546px"></div>
  <div class="hl" style="left:168px;top:863px;width:546px"></div>
  <div class="hl" style="left:168px;top:910px;width:546px"></div>
  <div class="hl" style="left:168px;top:958px;width:546px"></div>
  <div class="hl" style="left:168px;top:1007px;width:546px"></div>
  <svg class="abs" style="left:172.9px;top:776.3px" width="34" height="34" viewBox="0 0 34 34"><defs><clipPath id="av0"><circle cx="17" cy="17" r="16"/></clipPath></defs><g clip-path="url(#av0)"><rect width="34" height="34" fill="#f1f0ee"/><path d="M7.500 27 C4.500 22 6.500 17 7.500 13 C8 6 12 3.500 16 3.500 C21 3.500 24.500 7 24.500 13 C25 17 27.500 21 25.500 26 C22 29 11 29.500 7.500 27Z" fill="#a8703f"/><path d="M2 34 C3.500 27.500 9 25.500 16 25.500 C23.500 25.500 29.500 27.500 31.500 34Z" fill="#c2ad8d"/><path d="M13.500 22 H18.500 V27 C17.500 28.500 14.500 28.500 13.500 27Z" fill="#d9a88a"/><ellipse cx="16" cy="14.500" rx="5" ry="6.600" fill="#e6b89c"/><path d="M11 15.500 C11.300 22.500 14 24.500 16 24.500 C18 24.500 20.700 22.500 21 15.500 C19.800 19 12.200 19 11 15.500Z" fill="#8e5a33"/><path d="M10.800 12 C11.500 6.500 20.500 6.500 21.200 12 C19 9.500 13 9.500 10.800 12Z" fill="#b27a45"/><path d="M11.300 13.800 h3.900 v2 h-3.900Z M16.800 13.800 h3.900 v2 h-3.900Z" fill="none" stroke="#5a3a22" stroke-width=".8"/><path d="M9 14 C7.500 18 8 22 9.500 25 M23 14 C24.500 18 24.500 22 23 25" stroke="#c08a52" stroke-width="1.200" fill="none"/></g></svg>
  <span class="t mn" style="left:213.4px;top:783.5px">Rammurthi</span>
  <span class="t mp" style="left:213.4px;top:798.4px">Mentor Progress</span>
  <div class="abs" style="left:341.2px;top:790.0px;width:321px;height:9px;border-radius:5px;background:#dadada"><div style="width:81.3%;height:9px;border-radius:5px;background:#2460e6"></div></div>
  <span class="t pc" style="left:671.4px;top:790.6px">80%</span>
  <svg class="abs" style="left:172.9px;top:823.7px" width="34" height="34" viewBox="0 0 34 34"><defs><clipPath id="av1"><circle cx="17" cy="17" r="16"/></clipPath></defs><g clip-path="url(#av1)"><rect width="34" height="34" fill="#f4f5f7"/><path d="M4 6 V24" stroke="#e9d9a0" stroke-width="1"/><path d="M5 34 C5.500 25 9 21.500 15.500 21 C23 21.500 27.500 24 29 34Z" fill="#23252e"/><path d="M12.800 21.500 L15.500 34 L19.500 34 L18.800 21.500Z" fill="#eef0f3"/><path d="M13.800 17.500 H18 V22 C17 23.200 14.800 23.200 13.800 22Z" fill="#b98661"/><ellipse cx="15.800" cy="13" rx="4.200" ry="5.300" fill="#c79770"/><path d="M11.700 14 C12 18.500 14 19.300 15.800 19.300 C17.600 19.300 19.700 18.500 20 14 C18.800 16.500 12.800 16.500 11.700 14Z" fill="#2a1d16"/><path d="M11.300 12.500 C10.300 6.500 13.500 5 16.300 5 C20 5 21.500 7.500 20.400 12.500 C19.500 9.300 13 8.800 11.300 12.500Z" fill="#15110f"/></g></svg>
  <span class="t mn" style="left:213.4px;top:829.5px">Rishi Thaney</span>
  <span class="t mp" style="left:213.4px;top:843.2px">Mentor Progress</span>
  <div class="abs" style="left:341.2px;top:835.6px;width:321px;height:9px;border-radius:5px;background:#dadada"><div style="width:53.5%;height:9px;border-radius:5px;background:#2460e6"></div></div>
  <span class="t pc" style="left:671.4px;top:836.2px">50%</span>
  <svg class="abs" style="left:172.9px;top:870.3px" width="34" height="34" viewBox="0 0 34 34"><defs><clipPath id="av2"><circle cx="17" cy="17" r="16"/></clipPath></defs><g clip-path="url(#av2)"><rect width="34" height="34" fill="#f6f6f6"/><path d="M2 34 C3.500 27 8 25 16.500 25 C25 25 29.500 27 31 34Z" fill="#a81b1e"/><path d="M12.800 22 H20.200 V26 C18.500 28.200 14.500 28.200 12.800 26Z" fill="#b57a54"/><ellipse cx="16.500" cy="14.500" rx="6.800" ry="8.500" fill="#c68b62"/><path d="M9.800 15 C9.800 23.500 13.500 25 16.500 25 C19.500 25 23.200 23.500 23.200 15 C22 20 11 20 9.800 15Z" fill="#2b1a12"/><path d="M12.800 18.300 Q16.500 22.300 20.200 18.300 Q16.500 19.500 12.800 18.300Z" fill="#fff"/><path d="M9.600 13 C8.300 4.500 13 2.500 17 2.500 C22 2.500 24.800 5.500 23.400 13 C22.500 8 11.500 7.500 9.600 13Z" fill="#17100c"/><path d="M12.300 12.300 h2.800 m2.800 0 h2.800" stroke="#1d120c" stroke-width="1"/></g></svg>
  <span class="t mn" style="left:213.4px;top:876.5px">Sagar Mahadevan</span>
  <span class="t mp" style="left:213.4px;top:890.1px">Mentor Progress</span>
  <div class="abs" style="left:341.2px;top:882.8px;width:321px;height:9px;border-radius:5px;background:#dadada"><div style="width:16.8%;height:9px;border-radius:5px;background:#2460e6"></div></div>
  <span class="t pc" style="left:671.4px;top:883.4px">17%</span>
  <svg class="abs" style="left:172.9px;top:917.9px" width="34" height="34" viewBox="0 0 34 34"><defs><clipPath id="av3"><circle cx="17" cy="17" r="16"/></clipPath></defs><g clip-path="url(#av3)"><rect width="34" height="34" fill="#b9dcee"/><path d="M5 34 C3 24 6.500 6.500 18 5 C27 5.500 28.500 14 27.500 22 C27 26 28 30 29 34Z" fill="#1f1613"/><path d="M9 34 C10 28.500 14 26.500 20 26.500 C26 26.500 30 29 31 34Z" fill="#e6e1dc"/><path d="M12 30 l2 1.500 m2.500 -2 l2 1.800 m3 -2 l2 1.500 m-9 2.500 l2 1 m5 -1.500 l2 1.200" stroke="#8b8a92" stroke-width=".9"/><path d="M16.500 21.500 H21.500 V27 C20.500 28.500 17.500 28.500 16.500 27Z" fill="#dba98b"/><ellipse cx="19" cy="15" rx="5" ry="6.800" fill="#e9bb9c"/><path d="M13.500 15 C12.500 8 16.500 6.500 19.500 6.500 C23 6.500 25.500 9 24.300 15 C23 10.500 18 9.500 13.500 15Z" fill="#1f1613"/><path d="M8 34 C6.500 27 9.500 19 13.800 14 C13 20 14 26 12.500 34Z" fill="#1f1613"/><path d="M17 19.200 Q19 20.800 21 19.200" stroke="#b5534e" stroke-width="1" fill="none"/></g></svg>
  <span class="t mn" style="left:213.4px;top:923.7px">Shreya Hegde</span>
  <span class="t mp" style="left:213.4px;top:937.5px">Mentor Progress</span>
  <div class="abs" style="left:341.2px;top:930.2px;width:321px;height:9px;border-radius:5px;background:#dadada"><div style="width:40.3%;height:9px;border-radius:5px;background:#2460e6"></div></div>
  <span class="t pc" style="left:671.4px;top:930.8px">42%</span>
  <svg class="abs" style="left:172.9px;top:965.4px" width="34" height="34" viewBox="0 0 34 34"><defs><clipPath id="av4"><circle cx="17" cy="17" r="16"/></clipPath></defs><g clip-path="url(#av4)"><rect width="34" height="34" fill="#e3e4e6"/><path d="M2 34 C4 28.500 9.500 27 17 27 C24.500 27 30 28.500 32 34Z" fill="#e2b291"/><path d="M13.200 22 H20.800 V28 C19 30 15 30 13.200 28Z" fill="#d6a07e"/><ellipse cx="17" cy="15.500" rx="6.300" ry="8" fill="#e4b18e"/><path d="M10.800 17 C11.200 23.500 14.500 24.800 17 24.800 C19.500 24.800 22.800 23.500 23.200 17 C21.500 21 12.500 21 10.800 17Z" fill="#b07c5c"/><path d="M13.800 19.500 Q17 22.300 20.200 19.500 Q17 20.500 13.800 19.500Z" fill="#fff"/><path d="M10.400 13.500 C9.300 5.500 13.500 3.500 17.500 3.500 C22 3.500 24.800 6.500 23.600 13.500 C22.500 9 12.500 8.500 10.400 13.500Z" fill="#2a1c14"/><path d="M12.800 13.300 h2.800 m2.800 0 h2.800" stroke="#2a1c14" stroke-width="1"/></g></svg>
  <span class="t mn" style="left:213.4px;top:971.1px">Jason K</span>
  <span class="t mp" style="left:213.4px;top:984.9px">Mentor Progress</span>
  <div class="abs" style="left:341.2px;top:977.4px;width:321px;height:9px;border-radius:5px;background:#dadada"><div style="width:68.5%;height:9px;border-radius:5px;background:#2460e6"></div></div>
  <span class="t pc" style="left:671.4px;top:978.0px">65%</span>
  <div class="hl" style="left:786px;top:766px;width:641px"></div>
  <div class="hl" style="left:786px;top:799px;width:641px"></div>
  <div class="hl" style="left:786px;top:834px;width:641px"></div>
  <div class="hl" style="left:786px;top:869px;width:641px"></div>
  <div class="hl" style="left:786px;top:903px;width:641px"></div>
  <div class="hl" style="left:786px;top:938px;width:641px"></div>
  <div class="hl" style="left:786px;top:972px;width:641px"></div>
  <div class="hl" style="left:786px;top:1007px;width:641px"></div>
  <span class="t th" style="left:791.5px;top:774.2px">Start-Up Name</span>
  <span class="t th" style="left:1003.0px;top:778.2px">Status</span>
  <span class="t th" style="left:1166.0px;top:778.7px">Evaluator</span>
  <span class="t th" style="left:1331.4px;top:778.7px">Actions</span>
  <span class="t tn" style="left:793.0px;top:813.1px">Innovative AI Solutions</span>
  <span class="bd bp" style="left:996.0px;top:807.8px">Pending</span>
  <span class="t te" style="left:1166.0px;top:811.8px">Unassigned</span>
  <span class="bt" style="left:1306.0px;top:805.0px">Assign Evaluator</span>
  <span class="t tn" style="left:791.5px;top:846.7px">Green tech</span>
  <span class="bd ba" style="left:996.0px;top:840.4px">Approved</span>
  <span class="t te" style="left:1166.0px;top:847.0px">Rishi</span>
  <span class="bt" style="left:1306.0px;top:841.0px">Onboard</span>
  <span class="t tn" style="left:791.5px;top:885.1px">FinPlus Analytics</span>
  <span class="bd br" style="left:996.0px;top:877.2px">Rejected</span>
  <span class="t te" style="left:1166.0px;top:881.2px">Ganesh</span>
  <span class="bt" style="left:1306.0px;top:875.2px">Notify</span>
  <span class="t tn" style="left:791.5px;top:914.8px">EduSpark</span>
  <span class="bd bp" style="left:996.0px;top:911.9px">Pending</span>
  <span class="t te" style="left:1166.0px;top:914.0px">Shreya</span>
  <span class="bt" style="left:1306.0px;top:909.9px">Check progress</span>
  <span class="t tn" style="left:791.5px;top:950.8px">HealthBridge</span>
  <span class="bd bp" style="left:996.0px;top:946.2px">Pending</span>
  <span class="t te" style="left:1166.0px;top:950.8px">Jason</span>
  <span class="bt" style="left:1306.0px;top:945.0px">Check progress</span>
  <span class="t tn" style="left:791.5px;top:984.6px">NeuroPlus</span>
  <span class="bd ba" style="left:996.0px;top:980.5px">Approved</span>
  <span class="t te" style="left:1166.0px;top:984.5px">Sagar</span>
  <span class="bt" style="left:1306.0px;top:979.3px">Notify</span>
  <!--ROW3END-->
</div>
</body>
</html>
